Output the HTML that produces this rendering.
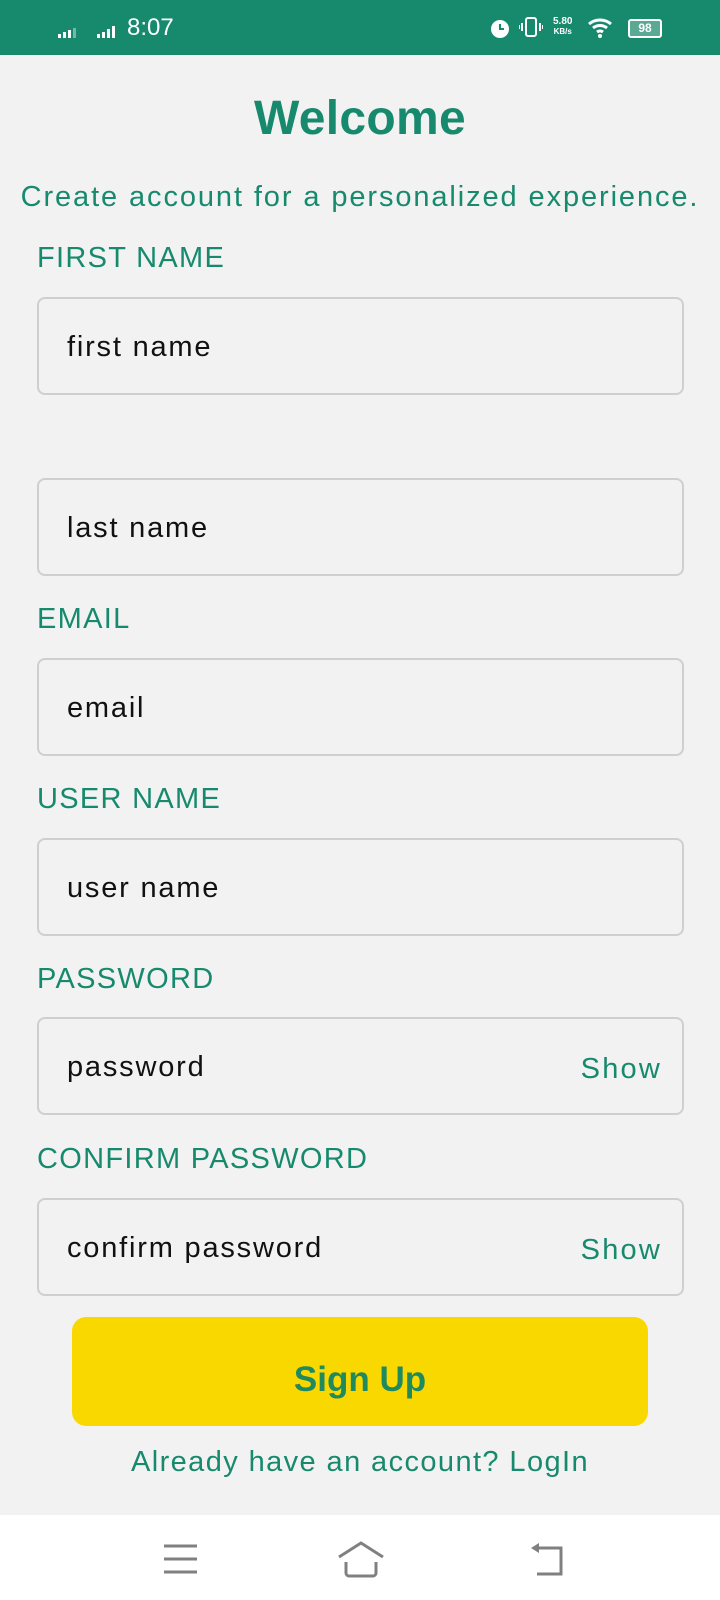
<!DOCTYPE html>
<html><head><meta charset="utf-8"><style>
*{margin:0;padding:0;box-sizing:border-box}
body{width:720px;height:1600px;background:#f2f2f2;font-family:"Liberation Sans",sans-serif;position:relative;overflow:hidden}
.sb{position:absolute;left:0;top:0;width:720px;height:55px;background:#178a6e;color:#fff}
.a{position:absolute}
.t{color:#178a6e}
.lbl{position:absolute;left:37px;font-size:29px;color:#178a6e;letter-spacing:1.3px;line-height:30px}
.in{position:absolute;left:37px;width:647px;height:98px;border:2px solid #cfcfcf;border-radius:8px;background:#f2f2f2}
.in span{position:absolute;left:28px;top:0;line-height:96px;font-size:29px;color:#111;letter-spacing:1.8px}
.in b{position:absolute;right:20px;top:0;line-height:100px;font-size:29px;color:#178a6e;font-weight:normal;letter-spacing:2.2px}
.nav{position:absolute;left:0;top:1515px;width:720px;height:85px;background:#fff}
</style></head><body>
<div class="sb">
  <svg class="a" style="left:58px;top:27px" width="24" height="12"><rect x="0" y="7" width="3" height="4" fill="#fff"/><rect x="5" y="5" width="3" height="6" fill="#fff"/><rect x="10" y="3" width="3" height="8" fill="#fff"/><rect x="15" y="1" width="3" height="10" fill="#fff" opacity=".4"/></svg>
  <svg class="a" style="left:97px;top:26px" width="24" height="13"><rect x="0" y="8" width="3" height="4" fill="#fff"/><rect x="5" y="6" width="3" height="6" fill="#fff"/><rect x="10" y="3" width="3" height="9" fill="#fff"/><rect x="15" y="0" width="3" height="12" fill="#fff"/></svg>
  <div class="a" style="left:127px;top:14px;font-size:24px;color:#fff">8:07</div>
  <svg class="a" style="left:489px;top:17px" width="22" height="22"><circle cx="11" cy="12" r="9" fill="#fff"/><path d="M11 7v5h4" stroke="#178a6e" stroke-width="2" fill="none"/></svg>
  <svg class="a" style="left:519px;top:16px" width="24" height="22"><rect x="7" y="2" width="10" height="18" rx="2" fill="none" stroke="#fff" stroke-width="2"/><path d="M3 7v8M21 7v8M0 9v4M24 9v4" stroke="#fff" stroke-width="2"/></svg>
  <div class="a" style="left:553px;top:17px;font-size:10px;color:#fff;font-weight:bold;line-height:10px;text-align:center">5.80<br><span style="font-size:8px">KB/s</span></div>
  <svg class="a" style="left:588px;top:17px" width="26" height="22"><path d="M1 7a17 17 0 0 1 22 0M5 11a11 11 0 0 1 14 0M9 15a5 5 0 0 1 6 0" stroke="#fff" stroke-width="3" fill="none"/><circle cx="12" cy="19" r="2" fill="#fff"/></svg>
  <div class="a" style="left:628px;top:19px;width:34px;height:19px;border:2px solid #fff;border-radius:3px;background:#5aa994;color:#fff;font-size:12px;font-weight:bold;text-align:center;line-height:15px">98</div>
</div>
<div class="a t" style="left:0;width:720px;top:93px;text-align:center;font-size:48px;font-weight:bold;line-height:52px;letter-spacing:0.3px">Welcome</div>
<div class="a t" style="left:0;width:720px;top:181px;text-align:center;font-size:29px;letter-spacing:1.9px;line-height:32px">Create account for a personalized experience.</div>
<div class="lbl" style="top:243px">FIRST NAME</div>
<div class="in" style="top:297px"><span>first name</span></div>
<div class="in" style="top:478px"><span>last name</span></div>
<div class="lbl" style="top:604px">EMAIL</div>
<div class="in" style="top:658px"><span>email</span></div>
<div class="lbl" style="top:784px">USER NAME</div>
<div class="in" style="top:838px"><span>user name</span></div>
<div class="lbl" style="top:964px">PASSWORD</div>
<div class="in" style="top:1017px"><span>password</span><b>Show</b></div>
<div class="lbl" style="top:1144px">CONFIRM PASSWORD</div>
<div class="in" style="top:1198px"><span>confirm password</span><b>Show</b></div>
<div class="a" style="left:72px;top:1317px;width:576px;height:109px;background:#f9d800;border-radius:14px;text-align:center;line-height:126px;font-size:35px;font-weight:bold;color:#1e8a5e">Sign Up</div>
<div class="a t" style="left:0;width:720px;top:1446px;text-align:center;font-size:29px;letter-spacing:1.4px;line-height:32px">Already have an account? LogIn</div>
<div class="nav">
  <svg class="a" style="left:163px;top:28px" width="36" height="32"><path d="M1 3h33M1 16h33M1 29h33" stroke="#808080" stroke-width="3"/></svg>
  <svg class="a" style="left:337px;top:25px" width="48" height="38"><path d="M2 17L24 3L46 17" stroke="#808080" stroke-width="3" fill="none"/><path d="M9 22v11a3 3 0 0 0 3 3h24a3 3 0 0 0 3-3v-11" stroke="#808080" stroke-width="3" fill="none"/></svg>
  <svg class="a" style="left:531px;top:26px" width="36" height="36"><path d="M5 7h25v26H6" stroke="#808080" stroke-width="3" fill="none"/><path d="M0 7l8-5v10z" fill="#808080"/></svg>
</div>
</body></html>
